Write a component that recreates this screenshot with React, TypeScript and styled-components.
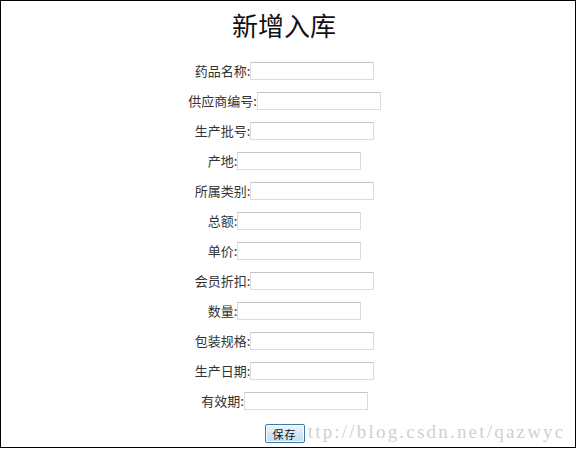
import styled, { createGlobalStyle } from 'styled-components'

const GlobalStyle = createGlobalStyle`
  html, body {
    margin: 0;
    padding: 0;
    background: #fff;
  }
`

const Frame = styled.div`
  position: relative;
  box-sizing: border-box;
  width: 576px;
  height: 448px;
  border: 1px solid #000;
  overflow: hidden;
  font-family: 'Noto Sans CJK SC', 'Noto Sans', sans-serif;
  color: #222;
`

const Title = styled.h1`
  margin: 0;
  padding-top: 12px;
  padding-right: 8px;
  text-align: center;
  font-family: 'Liberation Serif', 'Noto Sans CJK SC', serif;
  font-size: 26px;
  font-weight: 400;
  line-height: 30px;
  color: #111;
`

const Form = styled.form`
  display: flex;
  flex-direction: column;
  align-items: center;
  margin-top: 13px;
  padding-right: 7px;
`

const Row = styled.div`
  display: flex;
  align-items: center;
  height: 30px;
`

const Label = styled.label`
  font-size: 13px;
  line-height: 18px;
  color: #333;
  white-space: nowrap;
`

const Input = styled.input`
  box-sizing: border-box;
  width: 124px;
  height: 18px;
  margin: 0;
  padding: 1px 2px;
  border: 1px solid #dcdcdc;
  border-top-color: #c4c4c4;
  background: #fff;
  outline: none;
`

const SaveButton = styled.button`
  position: relative;
  z-index: 1;
  box-sizing: border-box;
  width: 40px;
  height: 19px;
  margin-top: 8px;
  padding: 0;
  border: 1px solid #3d7bab;
  border-radius: 2px;
  background: linear-gradient(#eef7fc, #d2e8f5 50%, #c2dff0);
  box-shadow: inset 0 0 0 1px #f8fcff;
  font-family: 'Noto Sans CJK SC', sans-serif;
  font-size: 11px;
  line-height: 16px;
  letter-spacing: 1px;
  color: #111;
`

const Watermark = styled.div`
  position: absolute;
  left: 295px;
  top: 420px;
  font-family: 'Liberation Serif', serif;
  font-size: 19px;
  line-height: 22px;
  letter-spacing: 2.2px;
  color: #d0d0d0;
  text-shadow: 0 0 1px #fff;
  pointer-events: none;
  white-space: nowrap;
`

const fields = [
  '药品名称',
  '供应商编号',
  '生产批号',
  '产地',
  '所属类别',
  '总额',
  '单价',
  '会员折扣',
  '数量',
  '包装规格',
  '生产日期',
  '有效期',
]

export default function App() {
  return (
    <>
      <GlobalStyle />
      <Frame>
        <Title>新增入库</Title>
        <Form onSubmit={(e) => e.preventDefault()}>
          {fields.map((name) => (
            <Row key={name}>
              <Label>{name}:</Label>
              <Input type="text" />
            </Row>
          ))}
          <SaveButton type="submit">保存</SaveButton>
        </Form>
        <Watermark>http://blog.csdn.net/qazwyc</Watermark>
      </Frame>
    </>
  )
}
